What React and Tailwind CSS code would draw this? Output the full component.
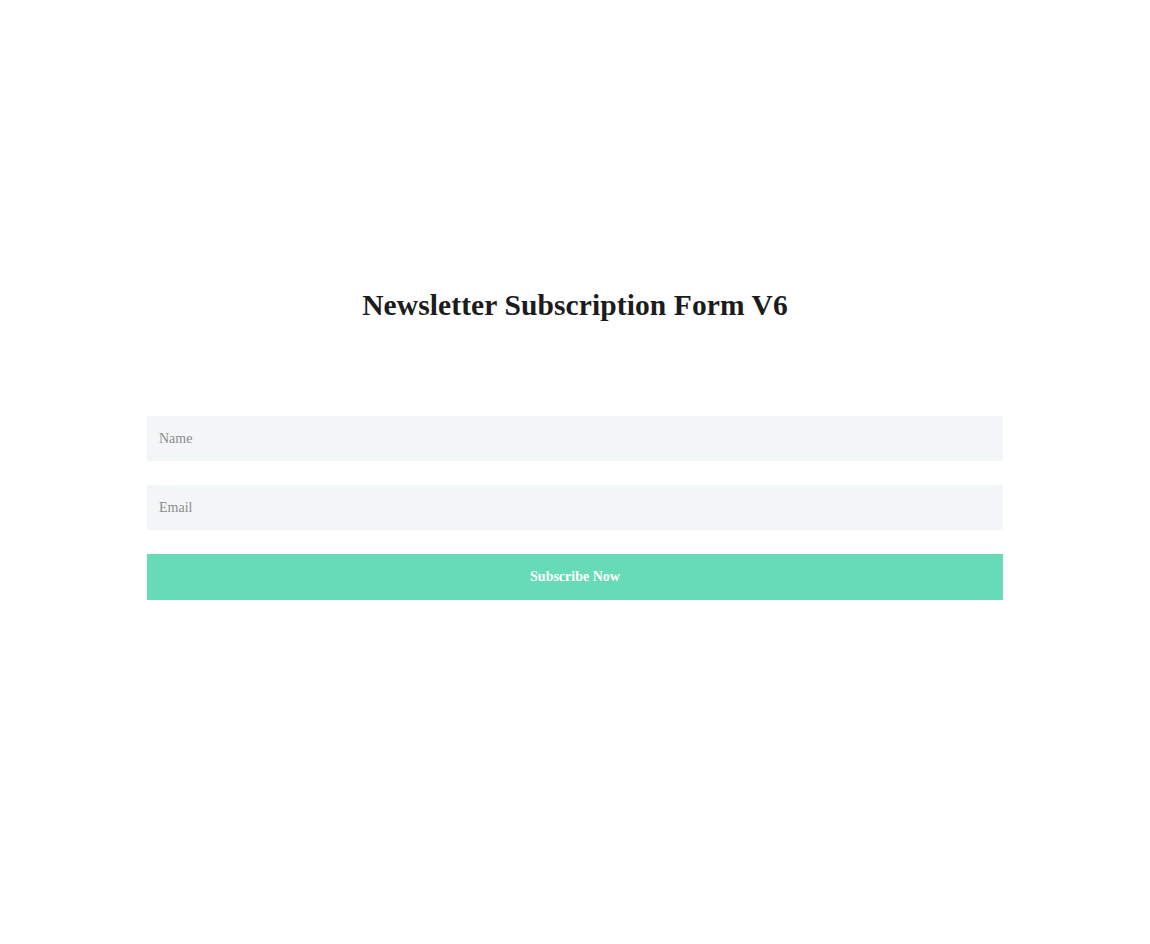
export default function App() {
  return (
    <div
      className="min-h-screen bg-white text-[#1e1e1e]"
      style={{ fontFamily: '"Liberation Serif", "DejaVu Serif", serif' }}
    >
      <div className="mx-auto w-[856px] pt-[284px]">
        <h1 className="text-center text-[29.5px] font-semibold leading-[42px] tracking-[0.1px] text-[#1c1c1c]">
          Newsletter Subscription Form V6
        </h1>

        <form className="mt-[90px] flex flex-col gap-6" onSubmit={(e) => e.preventDefault()}>
          <input
            type="text"
            placeholder="Name"
            className="h-[45px] w-full bg-[#f3f6f7] px-3 text-sm text-[#333] outline-none placeholder:text-[#8c8c8c]"
          />
          <input
            type="email"
            placeholder="Email"
            className="h-[45px] w-full bg-[#f3f6f7] px-3 text-sm text-[#333] outline-none placeholder:text-[#8c8c8c]"
          />
          <button
            type="submit"
            className="h-[46px] w-full bg-[#67dbb6] text-sm font-bold text-white"
          >
            Subscribe Now
          </button>
        </form>
      </div>
    </div>
  )
}
